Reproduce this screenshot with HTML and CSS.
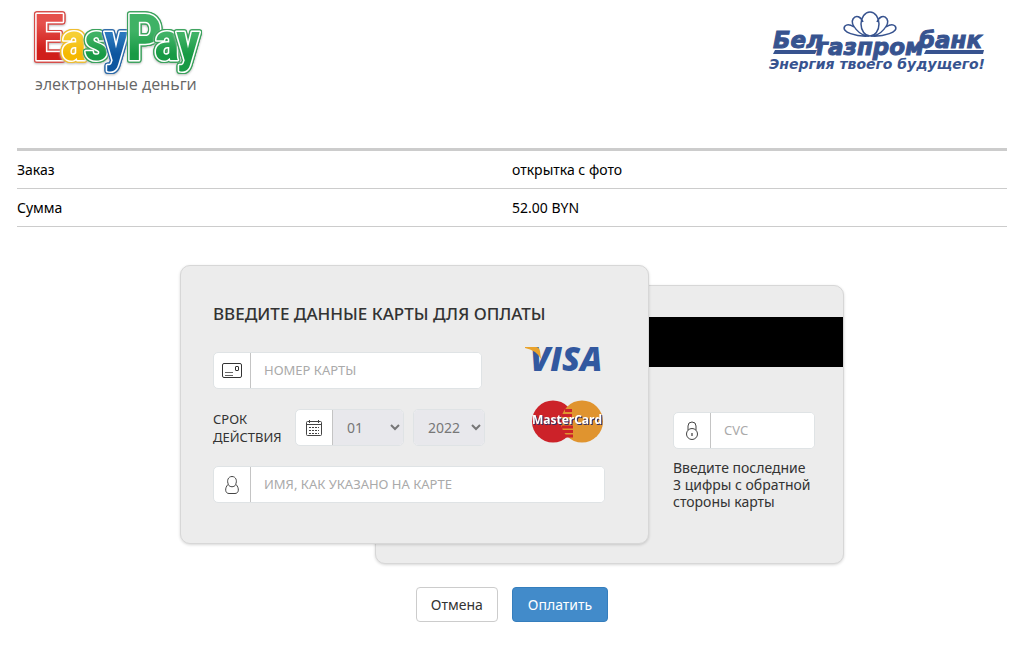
FILE: index.html
```html
<!DOCTYPE html>
<html lang="ru">
<head>
<meta charset="utf-8">
<meta name="viewport" content="width=device-width, initial-scale=1">
<title>Оплата картой</title>
<link rel="stylesheet" href="styles.css">
</head>
<body>
<header class="header">
  <svg class="logo-easypay" viewBox="0 0 180 92" role="img" aria-label="EasyPay электронные деньги">
    <defs>
      <linearGradient id="red" x2="0" y2="1"><stop offset=".3" stop-color="#e5504b"/><stop offset=".65" stop-color="#d01f1b"/></linearGradient>
      <linearGradient id="yellow" x2="0" y2="1"><stop offset=".4" stop-color="#f6cf35"/><stop offset=".7" stop-color="#f5b800"/></linearGradient>
      <linearGradient id="green" x2="0" y2="1"><stop offset=".4" stop-color="#3fb265"/><stop offset=".7" stop-color="#189a45"/></linearGradient>
      <linearGradient id="blue" x2="0" y2="1"><stop offset=".4" stop-color="#2a78bd"/><stop offset=".7" stop-color="#0e569f"/></linearGradient>
    </defs>
    <g class="brand">
      <text class="cap red" x="8" y="52">E</text>
      <text class="yellow" x="36" y="52">a</text>
      <text class="green" x="59" y="52">s</text>
      <text class="blue" x="79" y="52">y</text>
      <text class="cap green" x="101" y="52">P</text>
      <text class="green" x="129" y="52">a</text>
      <text class="green" x="151" y="52">y</text>
    </g>
    <text class="brand-sub" x="10" y="82">электронные деньги</text>
  </svg>
  <svg class="logo-bank" viewBox="0 0 220 68" role="img" aria-label="Белгазпромбанк. Энергия твоего будущего!">
    <g fill="none" stroke="#37538f" stroke-width="1.500">
      <ellipse cx="102" cy="16" rx="9" ry="12"/>
      <path d="M101 28C91 28 82 16 85 11C88 6 93 9 95 14M103 28C113 28 122 16 119 11C116 6 111 9 109 14M101 28C89 29 72 24 77 18C79 16 83 17 86 19M103 28C115 29 132 24 127 18C125 16 121 17 118 19"/>
    </g>
    <g class="bank-name">
      <text x="5" y="40">Бел</text>
      <text x="48" y="47">газпром</text>
      <text x="151" y="40">банк</text>
    </g>
    <path fill="#37538f" d="M7 42H49L47 46H5ZM158 42H216L215 46H156Z"/>
    <text class="bank-motto" x="1" y="61">Энергия твоего будущего!</text>
  </svg>
</header>

<main class="page">
  <table class="order">
    <tbody>
      <tr><th scope="row">Заказ</th><td>открытка с фото</td></tr>
      <tr><th scope="row">Сумма</th><td>52.00 BYN</td></tr>
    </tbody>
  </table>

  <form class="payment">
    <div class="cards">
      <section class="card card-back">
        <div class="stripe"></div>
        <div class="cvc">
          <div class="field">
            <label class="field-icon" for="cvc" aria-label="CVC">
              <svg width="14" height="20" viewBox="0 0 14 20" fill="none" stroke="#444"><circle cx="7" cy="13" r="5.500"/><path d="M3 9V5a4 4 0 0 1 8 0V9"/><path d="M7 12v3" stroke="#888" stroke-width="2"/></svg>
            </label>
            <input id="cvc" type="text" placeholder="CVC" inputmode="numeric">
          </div>
          <p class="hint">Введите последние<br>3 цифры с обратной<br>стороны карты</p>
        </div>
      </section>

      <section class="card card-front">
        <h1 class="title">ВВЕДИТЕ ДАННЫЕ КАРТЫ ДЛЯ ОПЛАТЫ</h1>
        <div class="details">
          <div class="rows">
            <div class="field">
              <label class="field-icon" for="number" aria-label="Номер карты">
                <svg width="20" height="15" viewBox="0 0 20 15" fill="none" stroke="#333"><rect x=".5" y=".5" width="19" height="14" rx="1.500"/><rect x="13.500" y="3.500" width="3" height="4" rx=".5"/><path d="M3 9.500h8M3 12.500h8" stroke="#666"/></svg>
              </label>
              <input id="number" type="text" placeholder="НОМЕР КАРТЫ" inputmode="numeric">
            </div>
            <div class="expiry">
              <label class="expiry-label" for="month">СРОК<br>ДЕЙСТВИЯ</label>
              <div class="field field-month">
                <span class="field-icon">
                  <svg width="16" height="16" viewBox="0 0 16 16" fill="none" stroke="#444"><rect x=".5" y="1.500" width="15" height="14" rx="1"/><path d="M1 4.500h14M3.500 0v3M12.500 0v3"/><path d="M3 7.500h10M3 10.500h10M3 13.500h10" stroke-dasharray="2 1"/></svg>
                </span>
                <select id="month"><option>01</option><option>02</option><option>03</option><option>04</option><option>05</option><option>06</option><option>07</option><option>08</option><option>09</option><option>10</option><option>11</option><option>12</option></select>
              </div>
              <div class="field field-year">
                <select id="year" aria-label="Год"><option>2022</option><option>2023</option><option>2024</option><option>2025</option></select>
              </div>
            </div>
          </div>
          <div class="systems">
            <svg width="79" height="26" viewBox="0 0 79 26" role="img" aria-label="VISA">
              <text class="visa" x="5" y="25">VISA</text>
              <path fill="#e9a32d" d="M0 1H11Q14 1 15 5L16 13Q11 4 0 2Z"/>
            </svg>
            <svg width="73" height="43" viewBox="0 0 73 43" role="img" aria-label="MasterCard">
              <circle cx="22" cy="21.500" r="21" fill="#cc2229"/>
              <circle cx="51" cy="21.500" r="21" fill="#e0942f"/>
              <path d="M34 10.500h7M31 15.500h10M30 21.500h12M31 27h11M32 31.500h10M35 36h7" stroke="#cc2229" stroke-width="3"/>
              <text class="mastercard" x="36" y="24">MasterCard</text>
            </svg>
          </div>
        </div>
        <div class="field">
          <label class="field-icon" for="holder" aria-label="Имя, как указано на карте">
            <svg width="14" height="18" viewBox="0 0 14 18" fill="none" stroke="#444"><path d="M3.500 8.500C1.500 5 3 .5 7 .5S12.500 5 10.500 8.500"/><path d="M3 8.500C-.5 12 0 17.500 4 17.500H10C14 17.500 14.500 12 11 8.500C9 11.500 5 11.500 3 8.500Z"/></svg>
          </label>
          <input id="holder" type="text" placeholder="ИМЯ, КАК УКАЗАНО НА КАРТЕ">
        </div>
      </section>
    </div>
    <div class="actions">
      <button class="btn" type="button">Отмена</button>
      <button class="btn btn-primary" type="submit">Оплатить</button>
    </div>
  </form>
</main>
</body>
</html>
```

FILE: styles.css
```css
* { box-sizing: border-box; }

body {
  margin: 0;
  background: #fff;
  color: #333;
  font: 14px/17px Tahoma, "Noto Sans", sans-serif;
}

input, select, button { font: inherit; color: inherit; }

.header {
  display: flex;
  justify-content: space-between;
  align-items: flex-start;
  padding: 8px 36px 0 25px;
  height: 148px;
}

.logo-easypay { width: 180px; height: 92px; overflow: visible; }
.logo-bank { width: 220px; height: 68px; overflow: visible; }

.brand {
  font-family: "Liberation Sans Narrow", "Roboto Condensed", "DejaVu Sans Condensed", sans-serif;
  font-weight: 700;
  font-size: 54px;
}
.brand .cap { font-size: 64px; }
.brand text {
  stroke: #fff;
  stroke-width: 3px;
  stroke-linejoin: round;
  paint-order: stroke;
  filter: drop-shadow(1px 0 0 var(--edge)) drop-shadow(-1px 0 0 var(--edge))
    drop-shadow(0 1px 0 var(--edge)) drop-shadow(0 -1px 0 var(--edge))
    drop-shadow(0 1px 1px #bbb);
}
.red { fill: url(#red); --edge: #d84a45; }
.yellow { fill: url(#yellow); --edge: #efbd30; }
.green { fill: url(#green); --edge: #3aa25c; }
.blue { fill: url(#blue); --edge: #2c69a8; }
.brand-sub { font: 16px "Open Sans", sans-serif; fill: #666; }

.bank-name {
  font: italic 700 23px "DejaVu Sans", sans-serif;
  fill: #37538f;
  stroke: #37538f;
  stroke-width: 1px;
}
.bank-motto { font: italic 700 14px "DejaVu Sans", sans-serif; fill: #37538f; }

.page { padding: 0 17px; }

.order {
  width: 100%;
  border-collapse: separate;
  border-spacing: 0;
  border-top: 3px solid #ccc;
  table-layout: fixed;
  color: #000;
}
.order th, .order td {
  height: 38px;
  padding: 0;
  border-bottom: 1px solid #ccc;
  font-weight: 400;
  text-align: left;
}

.payment { padding-top: 38px; }

.cards {
  display: grid;
  grid-template-columns: 195px 274px 195px;
  grid-template-rows: 20px auto 20px;
  justify-content: center;
}

.card {
  background: #ececec;
  border: 1px solid #d7d7d7;
  border-radius: 10px;
  box-shadow: 0 1px 3px rgba(0, 0, 0, .16);
}
.card-front {
  grid-column: 1 / 3;
  grid-row: 1 / 3;
  display: flex;
  flex-direction: column;
  gap: 20px;
  padding: 38px 43px 40px 32px;
}
.card-back {
  grid-column: 2 / 4;
  grid-row: 2 / 4;
  padding-top: 31px;
}

.title {
  margin: 0 0 8px;
  font-size: 17px;
  line-height: 20px;
  font-weight: 500;
  white-space: nowrap;
}

.details { display: flex; justify-content: space-between; }
.rows { display: flex; flex-direction: column; gap: 20px; width: 272px; }
.rows > .field { width: 269px; }

.field {
  display: flex;
  height: 37px;
  border: 1px solid #dfe3e5;
  border-radius: 5px;
  background: #fff;
  overflow: hidden;
}
.field-icon {
  flex: 0 0 37px;
  display: flex;
  align-items: center;
  justify-content: center;
  border-right: 1px solid #c4c4c4;
}
.field input {
  flex: 1;
  min-width: 0;
  border: 0;
  padding: 0 13px;
  background: #fff;
  font-size: 13px;
}
.field input::placeholder { color: #aaa; opacity: 1; }
.field select {
  flex: 1;
  min-width: 0;
  border: 0;
  padding: 0 0 0 10px;
  background-color: #e8e8ec;
  color: #777;
}

.expiry { display: flex; align-items: center; }
.expiry-label { width: 82px; font-size: 13px; line-height: 18px; }
.field-month { width: 109px; margin-right: 9px; }
.field-year { width: 72px; }

.systems {
  display: flex;
  flex-direction: column;
  align-items: flex-end;
  gap: 28px;
  margin: -6px 1px 0 0;
}
.systems svg { overflow: visible; }
.visa { font: italic 800 33px "Open Sans", sans-serif; fill: #32589f; }
.mastercard {
  font: 700 12px "Open Sans", sans-serif;
  fill: #fff;
  text-anchor: middle;
  filter: drop-shadow(1px 1px 0 #34305f);
}

.stripe { height: 50px; background: #000; }
.cvc { width: 142px; margin: 45px 28px 0 auto; }
.hint { margin: 10px 0 0; white-space: nowrap; }

.actions {
  display: flex;
  justify-content: center;
  gap: 14px;
  padding: 23px 0 30px;
}
.btn {
  height: 35px;
  padding: 0 14px;
  border: 1px solid #ccc;
  border-radius: 4px;
  background: #fff;
}
.btn-primary { padding: 0 15px; background: #428bca; border-color: #357ebd; color: #fff; }
```
